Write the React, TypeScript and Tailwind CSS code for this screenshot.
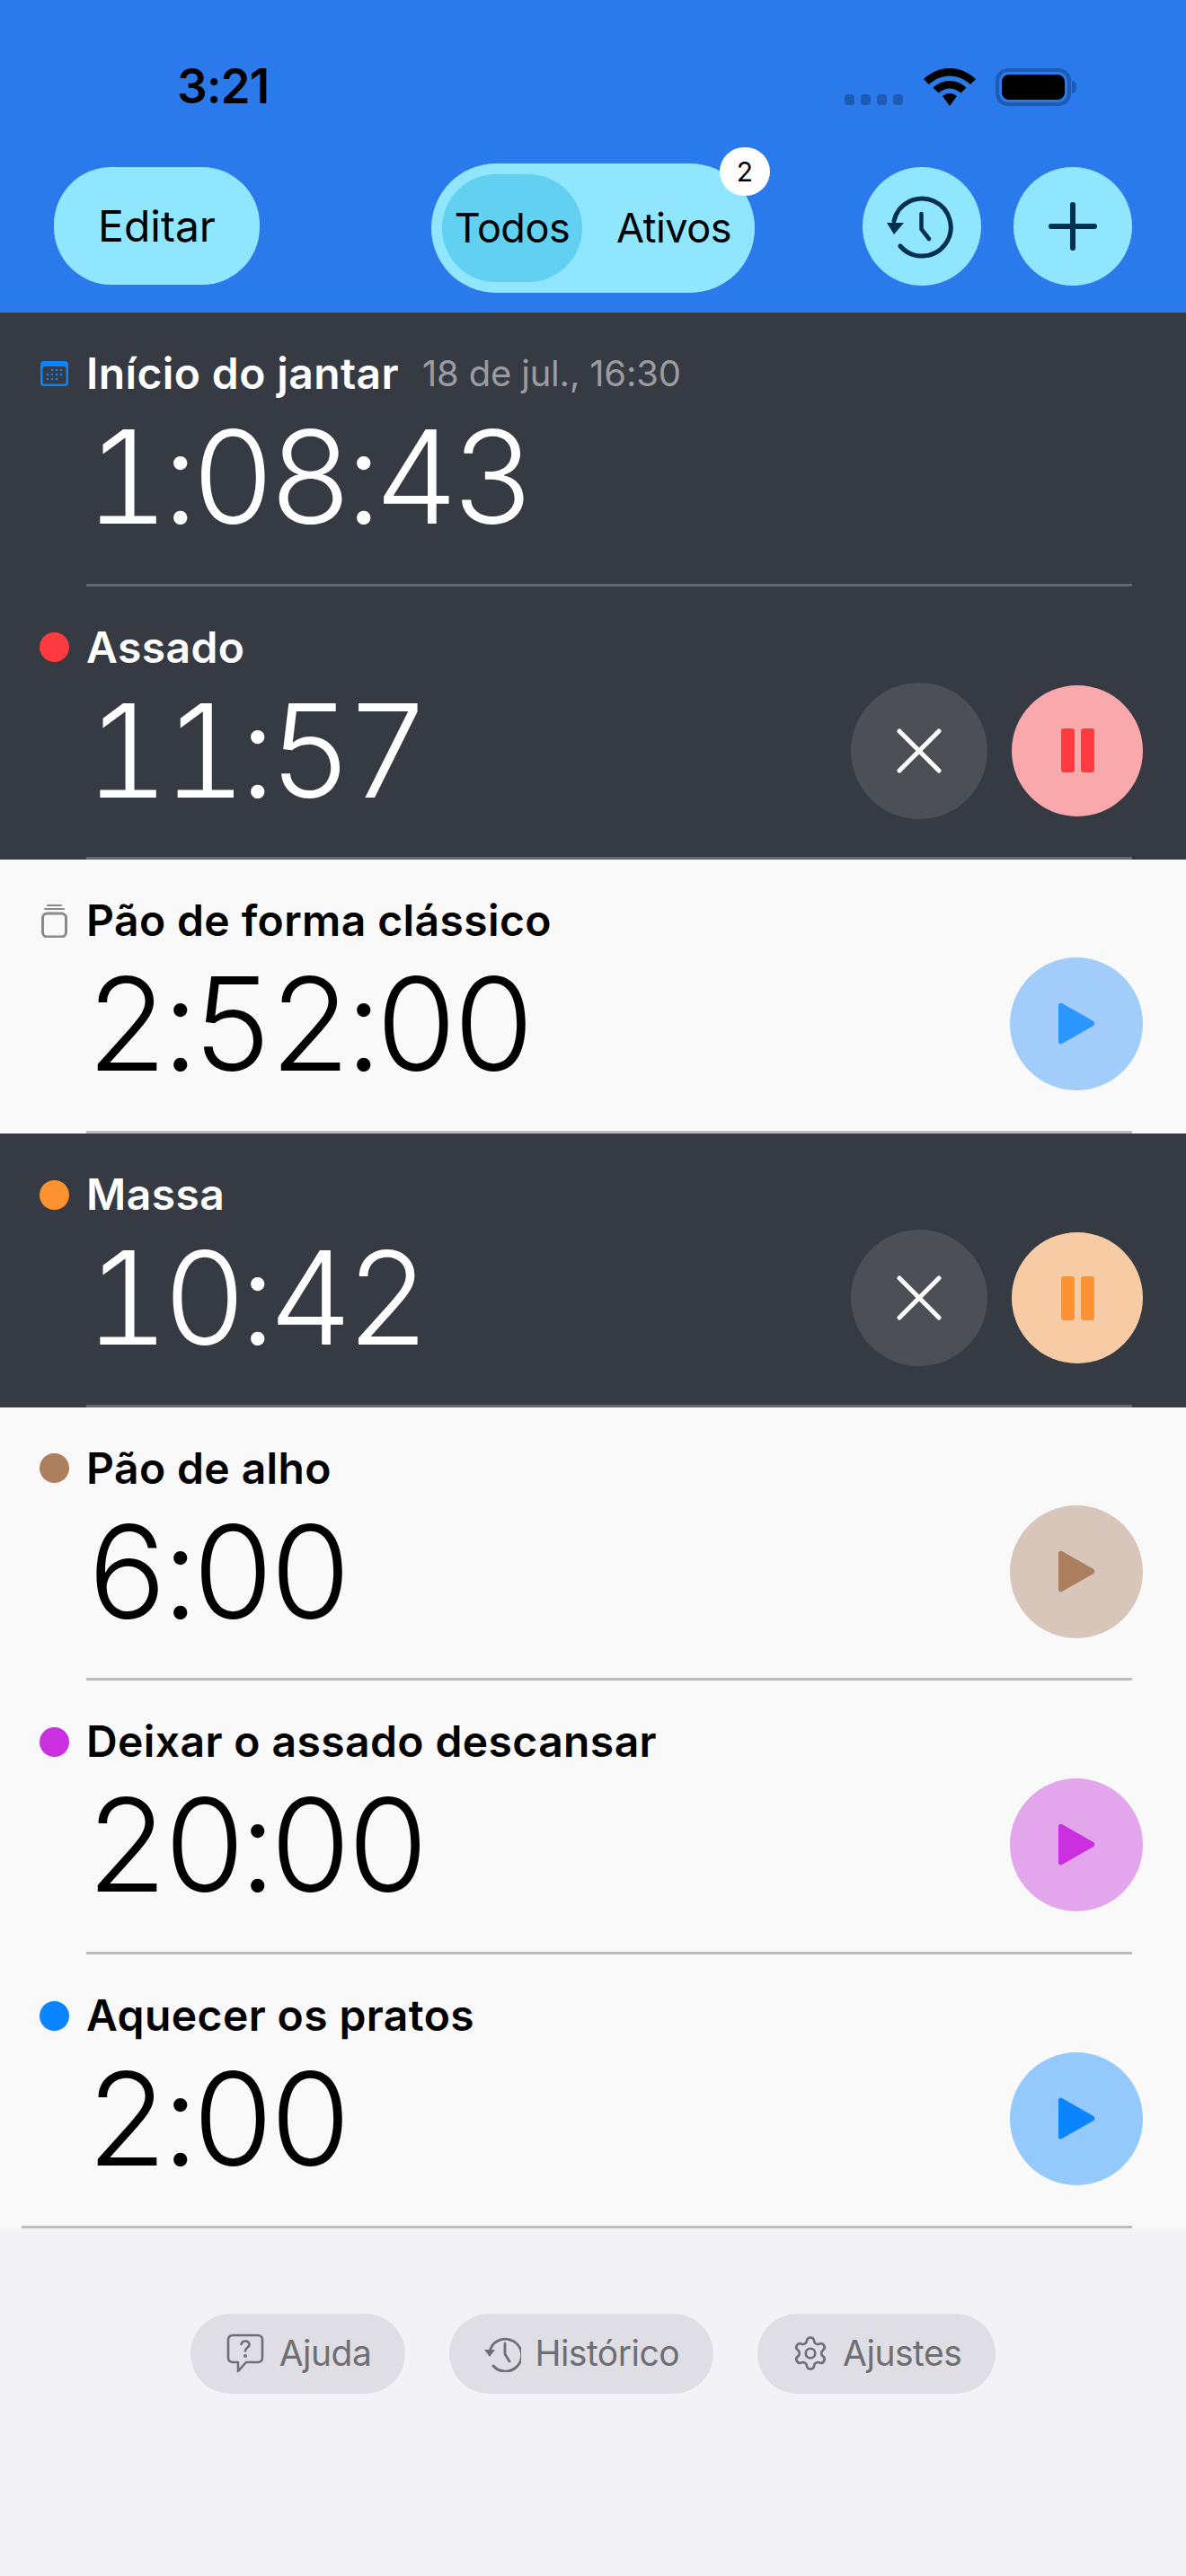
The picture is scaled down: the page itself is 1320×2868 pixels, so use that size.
import { Settings } from 'lucide-react';

const timers = [
  { name: 'Início do jantar', note: '18 de jul., 16:30', time: '1:08:43', icon: 'calendar', state: 'running-plain' },
  { name: 'Assado', time: '11:57', dot: 'bg-[#ff3b40]', circle: 'bg-[#f9a8ac]', fill: '#ff3b40', state: 'running' },
  { name: 'Pão de forma clássico', time: '2:52:00', icon: 'jar', circle: 'bg-[#a2cdfa]', fill: '#2a96ff', state: 'idle' },
  { name: 'Massa', time: '10:42', dot: 'bg-[#ff9230]', circle: 'bg-[#f7cba4]', fill: '#ff9230', state: 'running' },
  { name: 'Pão de alho', time: '6:00', dot: 'bg-[#ac7f5e]', circle: 'bg-[#d8c6ba]', fill: '#ac7f5e', state: 'idle' },
  { name: 'Deixar o assado descansar', time: '20:00', dot: 'bg-[#cb30e0]', circle: 'bg-[#e3a5ec]', fill: '#cb30e0', state: 'idle' },
  { name: 'Aquecer os pratos', time: '2:00', dot: 'bg-[#0a84ff]', circle: 'bg-[#94c9fb]', fill: '#0a84ff', state: 'idle' },
];

function CalendarIcon() {
  return (
    <svg width="33" height="30" viewBox="0 0 33 30">
      <rect x="1" y="1" width="31" height="28" rx="4" fill="#0a84ff" />
      <rect x="3.5" y="7" width="26" height="19.5" rx="2" fill="#363a42" />
      {[[14, 11], [19, 11], [24, 11], [9, 16], [14, 16], [19, 16], [24, 16], [9, 21], [14, 21], [19, 21]].map(([x, y]) => (
        <circle key={`${x}-${y}`} cx={x} cy={y} r="1.3" fill="#0a84ff" />
      ))}
    </svg>
  );
}

function JarIcon() {
  return (
    <svg width="33" height="38" viewBox="0 0 33 38" fill="none" stroke="#8a8a8e">
      <rect x="3.500" y="11" width="26" height="26" rx="5" strokeWidth="3" />
      <path d="M9 2h15M6 6h21" strokeWidth="2.200" strokeLinecap="round" />
    </svg>
  );
}

function Play({ fill }: { fill: string }) {
  return (
    <svg width="46" height="50" viewBox="0 0 46 50">
      <path d="M3 4.500c0-2.200 2-3.400 4-2.400l35 20c1.800 1 1.800 4 0 5l-35 20c-2 1-4-.2-4-2.400z" fill={fill} />
    </svg>
  );
}

function Pause({ fill }: { fill: string }) {
  return (
    <div className="flex gap-[7px]">
      <div className="w-[15px] h-[49px] rounded-[3px]" style={{ backgroundColor: fill }} />
      <div className="w-[15px] h-[49px] rounded-[3px]" style={{ backgroundColor: fill }} />
    </div>
  );
}

function HistoryIcon() {
  return (
    <svg width="132" height="132" viewBox="0 0 132 132" fill="none" stroke="#04304f" strokeLinecap="round" strokeLinejoin="round">
      <path d="M35 60A32 32 0 1 1 42 88" strokeWidth="5" />
      <path d="M65.500 52V69L74 80" strokeWidth="4.500" />
      <path d="M27 62H46L35 75Z" fill="#04304f" stroke="none" />
    </svg>
  );
}

function TimerRow({ t, last }: { t: (typeof timers)[number]; last: boolean }) {
  const dark = t.state !== 'idle';
  const running = t.state === 'running';
  return (
    <div className={`h-[304.7px] flex flex-col ${dark ? 'bg-[#363a42] text-white' : 'bg-[#f9f9f9] text-black'}`}>
      <div className="flex-1 pt-[38px] pl-[44px] pr-[48px]">
        <div className="flex items-center h-[60px]">
          <div className="w-[33px] mr-[19px] flex justify-center items-center">
            {t.icon === 'calendar' && <CalendarIcon />}
            {t.icon === 'jar' && <JarIcon />}
            {t.dot && <div className={`w-[33px] h-[33px] rounded-full ${t.dot}`} />}
          </div>
          <span className="text-[48px] font-semibold tracking-[0.4px] leading-[60px]">{t.name}</span>
          {t.note && <span className="ml-[26px] text-[40px] text-[#9a9ca2] tracking-[-0.2px]">{t.note}</span>}
        </div>
        <div className="flex items-center justify-between h-[152px] mt-[9px]">
          <span className="ml-[51px] text-[144px] font-light leading-[150px] tracking-[-7px] tabular-nums">{t.time}</span>
          <div className="flex items-center gap-[27px]">
            {running && (
              <div className="w-[152px] h-[152px] rounded-full bg-[#4c4f56] flex items-center justify-center">
                <svg width="50" height="50" viewBox="0 0 50 50" stroke="white" strokeWidth="5" strokeLinecap="round">
                  <path d="M3 3L47 47M47 3L3 47" />
                </svg>
              </div>
            )}
            {t.circle && (
              <div className={`${running ? 'w-[146px] h-[146px]' : 'w-[148px] h-[148px]'} rounded-full flex items-center justify-center ${t.circle}`}>
                {running ? <Pause fill={t.fill!} /> : <Play fill={t.fill!} />}
              </div>
            )}
          </div>
        </div>
      </div>
      <div className={`h-[3px] mr-[60px] ${last ? 'ml-[24px]' : 'ml-[96px]'} ${dark ? 'bg-[#66686f]' : 'bg-[#bcbcbe]'}`} />
    </div>
  );
}

function FooterPill({ icon, label }: { icon: React.ReactNode; label: string }) {
  return (
    <div className="h-[89px] px-[38px] rounded-full bg-[#dedee4] flex items-center gap-[15px] text-[#6e6e73] text-[39px] tracking-[-0.5px]">
      {icon}
      <span>{label}</span>
    </div>
  );
}

export default function App() {
  return (
    <div className="w-[1320px] h-[2868px] bg-[#f2f2f7] font-['Inter',sans-serif] overflow-hidden">
      <header className="h-[348px] bg-[#2a7aec]">
        <div className="h-[182px] pt-[12px] flex items-center justify-between pl-[197px] pr-[122px]">
          <span className="text-[53px] font-semibold tracking-[-1px] text-black">3:21</span>
          <div className="flex items-center">
            <div className="flex gap-[7px] mt-[28px] mr-[23px]">
              {[0, 1, 2, 3].map((i) => (
                <div key={i} className="w-[11px] h-[12px] rounded-[4px] bg-[#1c5cb4]" />
              ))}
            </div>
            <svg width="58" height="42" viewBox="0 0 58 42" className="mr-[22px]">
              <path d="M29 0C18 0 8 4.500 0 12L6 18C12.500 12 20.500 8.500 29 8.500S45.500 12 52 18L58 12C50 4.500 40 0 29 0Z" />
              <path d="M29 14C22 14 15.500 17 10.500 21.500L16.500 27.500C20 24.500 24.300 22.500 29 22.500S38 24.500 41.500 27.500L47.500 21.500C42.500 17 36 14 29 14Z" />
              <path d="M29 28C26 28 23.300 29 21 31L29 42L37 31C34.700 29 32 28 29 28Z" />
            </svg>
            <div className="w-[84px] h-[42px] rounded-[14px] border-[4px] border-[#1c5cb4] p-[3px] flex">
              <div className="flex-1 rounded-[8px] bg-black" />
            </div>
            <div className="w-[5px] h-[14px] rounded-r-full bg-[#1c5cb4] ml-[1px]" />
          </div>
        </div>
        <div className="h-[144px] px-[60px] flex items-center text-black">
          <div className="flex-1 mb-[5px]">
            <div className="w-[229px] h-[131px] rounded-[64px] bg-[#90e6ff] flex items-center justify-center text-[48px]">Editar</div>
          </div>
          <div className="relative w-[360px] h-[144px] rounded-[72px] bg-[#90e6ff] p-[12px] flex items-center text-[45px] tracking-[-0.5px]">
            <div className="w-[156px] h-[120px] rounded-[60px] bg-[#62d0f0] flex items-center justify-center">Todos</div>
            <div className="flex-1 flex items-center justify-center pl-[24px]">Ativos</div>
            <div className="absolute -top-[18px] -right-[17px] w-[56px] h-[54px] rounded-full bg-white flex items-center justify-center text-[30px] tracking-normal">2</div>
          </div>
          <div className="flex-1 flex justify-end gap-[36px] mb-[5px]">
            <div className="w-[132px] h-[132px] rounded-full bg-[#90e6ff]">
              <HistoryIcon />
            </div>
            <div className="w-[132px] h-[132px] rounded-full bg-[#90e6ff] flex items-center justify-center">
              <svg width="54" height="54" viewBox="0 0 54 54" stroke="#04304f" strokeWidth="6" strokeLinecap="round">
                <path d="M27 3V51M3 27H51" />
              </svg>
            </div>
          </div>
        </div>
      </header>

      <main>
        {timers.map((t, i) => (
          <TimerRow key={t.name} t={t} last={i === timers.length - 1} />
        ))}
      </main>

      <footer className="mt-[95px] flex justify-center gap-[49px]">
        <FooterPill
          label="Ajuda"
          icon={
            <svg width="46" height="44" viewBox="0 0 42 44" fill="none" stroke="#6e6e73" strokeWidth="2.600" strokeLinejoin="round" strokeLinecap="round">
              <path d="M7 2H35C38 2 40 4 40 7V27C40 30 38 32 35 32H22L13 42V32H7C4 32 2 30 2 27V7C2 4 4 2 7 2Z" />
              <path d="M16.500 12C17 9.500 19 8.500 21 8.500C23.500 8.500 25.500 10 25.500 12.500C25.500 15.500 21 15.500 21 19.500" />
              <circle cx="21" cy="25" r="0.800" />
            </svg>
          }
        />
        <FooterPill
          label="Histórico"
          icon={
            <svg width="42" height="42" viewBox="0 0 42 42" fill="none" stroke="#6e6e73" strokeLinecap="round" strokeLinejoin="round">
              <path d="M8 16A18 18 0 1 1 11 35" strokeWidth="2.800" />
              <path d="M24 10V22L29 30" strokeWidth="2.800" />
              <path d="M1 17H13L7 25Z" fill="#6e6e73" stroke="none" />
            </svg>
          }
        />
        <FooterPill label="Ajustes" icon={<Settings size={42} strokeWidth={1.5} color="#6e6e73" />} />
      </footer>
    </div>
  );
}
